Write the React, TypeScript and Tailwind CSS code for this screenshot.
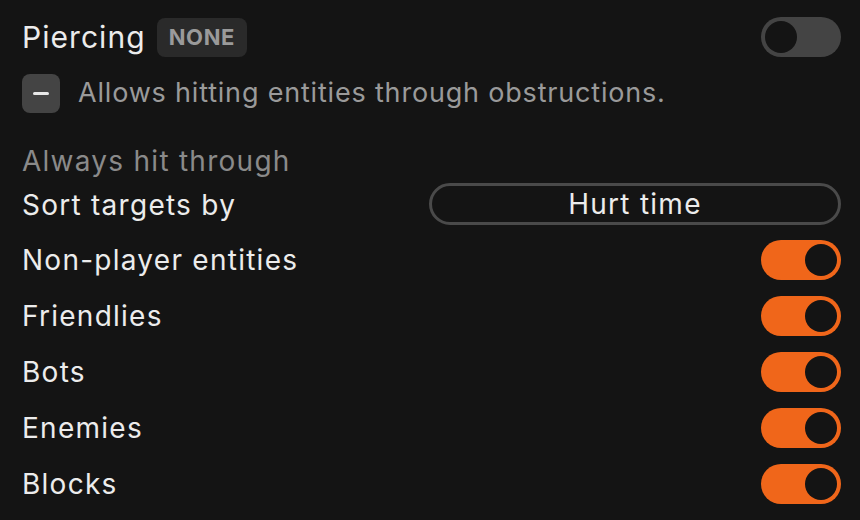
import React from "react";

function Toggle({ on }: { on: boolean }) {
  return (
    <div
      className={`flex h-10 w-20 shrink-0 items-center rounded-full p-1 ${
        on ? "justify-end bg-[#f0661a]" : "justify-start bg-[#444444]"
      }`}
    >
      <div className="h-8 w-8 rounded-full bg-[#141414]" />
    </div>
  );
}

const rows = ["Non-player entities", "Friendlies", "Bots", "Enemies", "Blocks"];

export default function App() {
  return (
    <div
      className="h-[520px] w-[860px] overflow-hidden bg-[#141414] pl-[22px] pr-[19px] text-[28px] tracking-[0.045em] text-[#ececec]"
      style={{ fontFamily: "Inter, 'Noto Sans', sans-serif" }}
    >
      {/* header */}
      <div className="mt-[17px] flex h-[40px] items-center justify-between">
        <div className="flex items-center gap-[11px]">
          <span className="text-[30px] leading-none tracking-[0.035em]">Piercing</span>
          <span className="flex h-[39px] items-center rounded-[8px] bg-[#2a2a2a] px-[12px] text-[22px] font-bold tracking-[0.03em] text-[#9a9a9a]">
            NONE
          </span>
        </div>
        <Toggle on={false} />
      </div>

      {/* description */}
      <div className="mt-[16px] flex items-center gap-[18px]">
        <div className="flex h-[39px] w-[38px] items-center justify-center rounded-[8px] bg-[#444444]">
          <div className="h-[3px] w-[16px] rounded-full bg-[#e8e8e8]" />
        </div>
        <span className="text-[27px] tracking-[0.03em] text-[#9a9a9a]">
          Allows hitting entities through obstructions.
        </span>
      </div>

      <div className="mt-[27px] leading-[40px] text-[#8a8a8a]">Always hit through</div>

      <div className="flex h-[46px] items-center justify-between">
        <span className="mt-[3px]">Sort targets by</span>
        <div className="flex h-[42px] w-[412px] items-center justify-center rounded-full border-[3px] border-[#4a4a4a]">
          <span>Hurt time</span>
        </div>
      </div>

      <div className="mt-[5px]">
        {rows.map((r) => (
          <div key={r} className="flex h-[56px] items-center justify-between">
            <span>{r}</span>
            <Toggle on />
          </div>
        ))}
      </div>
    </div>
  );
}
